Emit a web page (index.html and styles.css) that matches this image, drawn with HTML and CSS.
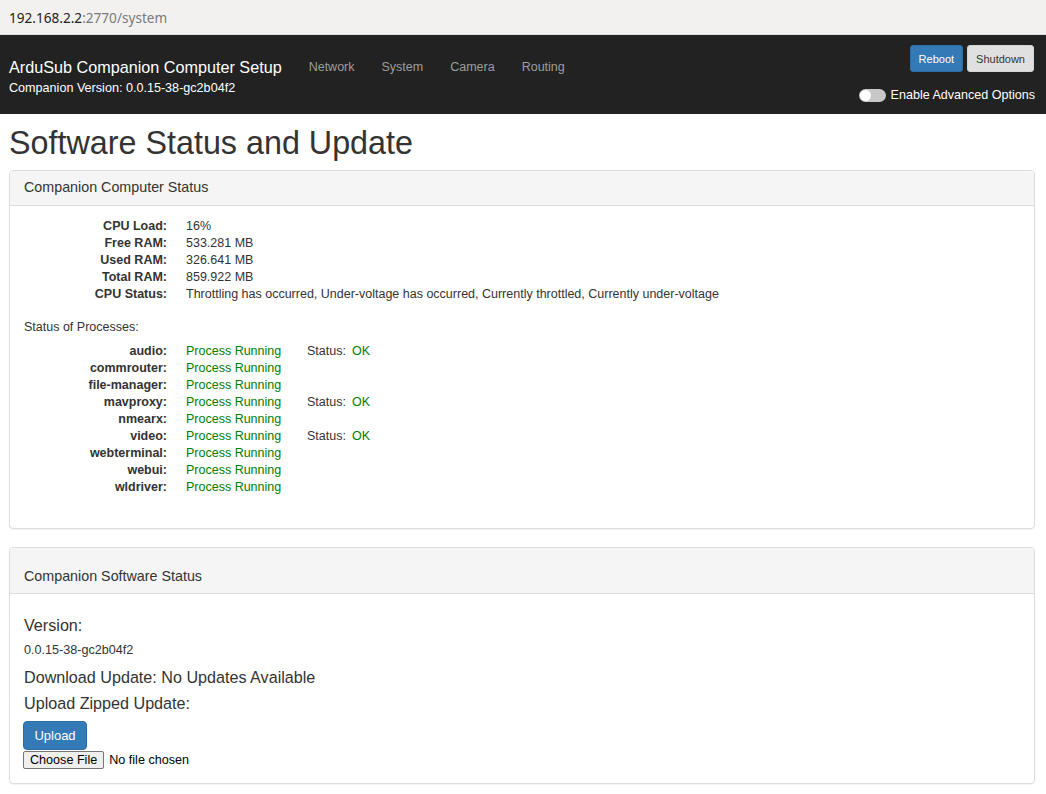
FILE: index.html
```html
<!DOCTYPE html>
<html>
<head>
<meta charset="utf-8">
<title>System</title>
<link rel="stylesheet" href="styles.css">
</head>
<body>
<div class="urlbar"><span class="host">192.168.2.2</span><span class="path">:2770/system</span></div>
<nav class="navbar">
  <div class="brand">
    <div class="brand-title">ArduSub Companion Computer Setup</div>
    <div class="brand-version">Companion Version: 0.0.15-38-gc2b04f2</div>
  </div>
  <ul class="nav-links">
    <li>Network</li>
    <li>System</li>
    <li>Camera</li>
    <li>Routing</li>
  </ul>
  <div class="nav-right">
    <div class="nav-buttons">
      <button class="btn btn-primary btn-sm">Reboot</button>
      <button class="btn btn-default btn-sm">Shutdown</button>
    </div>
    <label class="advanced"><span class="toggle"><span class="knob"></span></span>Enable Advanced Options</label>
  </div>
</nav>
<main class="container">
  <h1 class="page-title">Software Status and Update</h1>
  <section class="panel">
    <div class="panel-heading">Companion Computer Status</div>
    <div class="panel-body">
      <div class="info-grid">
        <div class="lbl">CPU Load:</div><div>16%</div>
        <div class="lbl">Free RAM:</div><div>533.281 MB</div>
        <div class="lbl">Used RAM:</div><div>326.641 MB</div>
        <div class="lbl">Total RAM:</div><div>859.922 MB</div>
        <div class="lbl">CPU Status:</div><div>Throttling has occurred, Under-voltage has occurred, Currently throttled, Currently under-voltage</div>
      </div>
      <div class="proc-title">Status of Processes:</div>
      <div class="proc-grid">
        <div class="lbl">audio:</div><div class="ok">Process Running</div><div class="st">Status:<span class="ok">OK</span></div>
        <div class="lbl">commrouter:</div><div class="ok">Process Running</div><div></div>
        <div class="lbl">file-manager:</div><div class="ok">Process Running</div><div></div>
        <div class="lbl">mavproxy:</div><div class="ok">Process Running</div><div class="st">Status:<span class="ok">OK</span></div>
        <div class="lbl">nmearx:</div><div class="ok">Process Running</div><div></div>
        <div class="lbl">video:</div><div class="ok">Process Running</div><div class="st">Status:<span class="ok">OK</span></div>
        <div class="lbl">webterminal:</div><div class="ok">Process Running</div><div></div>
        <div class="lbl">webui:</div><div class="ok">Process Running</div><div></div>
        <div class="lbl">wldriver:</div><div class="ok">Process Running</div><div></div>
      </div>
    </div>
  </section>
  <section class="panel panel-sw">
    <div class="panel-heading heading-tall">Companion Software Status</div>
    <div class="panel-body sw-body">
      <div class="big">Version:</div>
      <div class="small">0.0.15-38-gc2b04f2</div>
      <div class="big">Download Update: No Updates Available</div>
      <div class="big">Upload Zipped Update:</div>
      <button class="btn btn-primary btn-upload">Upload</button>
      <div class="file-row"><span class="choose">Choose File</span><span class="nofile">No file chosen</span></div>
    </div>
  </section>
</main>
</body>
</html>
```
FILE: styles.css
```css
* { box-sizing: border-box; }
html, body { margin: 0; padding: 0; background: #fff; }
body {
  font-family: "Liberation Sans", Arial, sans-serif;
  font-size: 12.5px;
  color: #333;
  width: 1046px;
  height: 794px;
  overflow: hidden;
}
.urlbar {
  height: 35px;
  background: #f2f1f0;
  border-bottom: 1px solid #dcdbd9;
  padding: 0 9px;
  display: flex;
  align-items: center;
  font-family: "Noto Sans", "DejaVu Sans", sans-serif;
  font-size: 13.6px;
}
.urlbar .host { color: #222; }
.urlbar .path { color: #7a7a7a; }

.navbar {
  height: 79px;
  background: #222;
  display: flex;
  align-items: flex-start;
  padding: 0 12px 0 9px;
}
.brand { padding-top: 22px; }
.brand-title { color: #fff; font-size: 16.2px; line-height: 20px; }
.brand-version { color: #fff; font-size: 12.6px; line-height: 14px; margin-top: 4px; }
.nav-links {
  list-style: none;
  margin: 0 0 0 27px;
  padding: 24px 0 0;
  display: flex;
  gap: 27px;
}
.nav-links li {
  color: #9d9d9d;
  font-size: 12.5px;
  line-height: 16px;
}
.nav-right {
  margin-left: auto;
  display: flex;
  flex-direction: column;
  align-items: flex-end;
  padding-top: 10px;
}
.nav-buttons { display: flex; gap: 4px; }
.btn {
  font-family: "Liberation Sans", Arial, sans-serif;
  border: 1px solid transparent;
  border-radius: 3px;
  cursor: pointer;
}
.btn-sm { font-size: 11px; height: 27px; padding: 0 8px; }
.btn-primary { background: #337ab7; border-color: #2e6da4; color: #fff; }
.btn-default { background: #e0e0e0; border-color: #d4d4d4; color: #333; }
.advanced {
  display: flex;
  align-items: center;
  color: #fff;
  font-size: 12.55px;
  margin-top: 16px;
  margin-right: -1px;
}
.toggle {
  width: 27px;
  height: 13px;
  border-radius: 7px;
  background: #c8c8c8;
  position: relative;
  margin-right: 5px;
}
.knob {
  position: absolute;
  left: 1px;
  top: 1px;
  width: 11px;
  height: 11px;
  border-radius: 50%;
  background: #fff;
}

.container { padding: 0 11px 0 9px; }
.page-title {
  font-size: 32.3px;
  font-weight: 500;
  line-height: 36px;
  margin: 11px 0 9px;
  color: #333;
}
.panel {
  border: 1px solid #ddd;
  border-radius: 4px;
  box-shadow: 0 1px 1px rgba(0,0,0,.05);
  margin-bottom: 18px;
}
.panel-heading {
  background: #f5f5f5;
  border-bottom: 1px solid #ddd;
  border-radius: 3px 3px 0 0;
  padding: 8px 14px 10px;
  font-size: 14.3px;
  line-height: 16px;
}
.heading-tall { padding: 20px 14px 9px; }
.panel-body { padding: 12px 14px 32px; }
.info-grid, .proc-grid {
  display: grid;
  grid-template-columns: 143px auto;
  column-gap: 19px;
  line-height: 17px;
}
.proc-grid { grid-template-columns: 143px 102px auto; }
.lbl { text-align: right; font-weight: bold; }
.proc-title { margin: 16px 0 7px; line-height: 17px; }
.ok { color: #008000; }
.st span { margin-left: 6px; }
.sw-body {
  padding: 21px 14px 14px;
  display: flex;
  flex-direction: column;
  align-items: flex-start;
}
.big { font-size: 16.15px; line-height: 20px; margin-bottom: 6px; }
.small { font-size: 12.6px; line-height: 14px; margin: 2px 0 10px; }
.btn-upload {
  font-size: 13px;
  height: 29px;
  width: 64px;
  padding: 0;
  border-radius: 4px;
  margin-left: -1px;
  margin-top: 2px;
}
.file-row { display: flex; align-items: center; margin-top: 1px; margin-left: -1px; }
.choose {
  font-size: 12.6px;
  background: #efefef;
  border: 1px solid #767676;
  border-radius: 2px;
  padding: 0 6px;
  height: 18px;
  line-height: 16px;
  color: #000;
}
.nofile { color: #000; margin-left: 5px; font-size: 12.6px; }
```
